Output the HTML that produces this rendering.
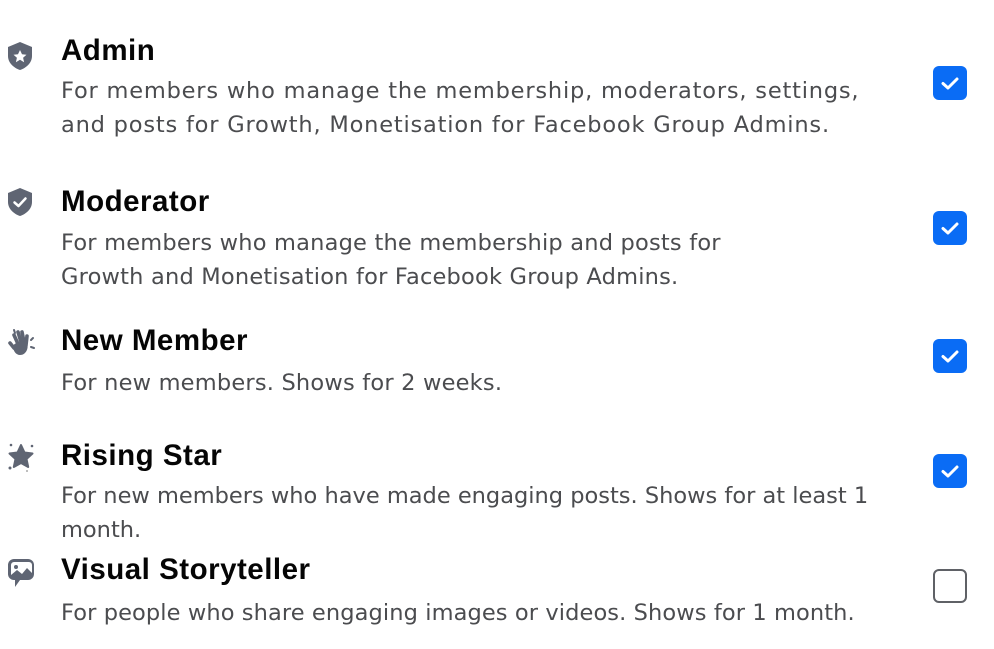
<!DOCTYPE html>
<html><head><meta charset="utf-8"><style>
body{margin:0;width:994px;height:649px;background:#fff;position:relative;overflow:hidden;font-family:"Liberation Sans",sans-serif}
.t{position:absolute;left:61px;font-weight:bold;font-size:29.5px;color:#050505;line-height:34px;letter-spacing:0.5px}
.d{position:absolute;left:61px;font-family:"DejaVu Sans",sans-serif;font-size:22.5px;color:#4b4c4f;line-height:34px;letter-spacing:0.2px;white-space:nowrap}
.cb{position:absolute;left:933px;width:34px;height:34px;border-radius:6px;background:#0a6cf5}
.cb svg{position:absolute;left:0;top:0}
.un{background:#fff;border:2.5px solid #5f6166;box-sizing:border-box}
.ic{position:absolute;left:5px}
</style></head><body>
<svg class="ic" style="top:40px" width="30" height="32" viewBox="0 0 30 32"><path d="M15 2 L27 7 V16 C27 23 21 28 15 30 C9 28 3 23 3 16 V7 Z" fill="#5f6573"/><path d="M15 10 l2 4.2 4.5 .5 -3.4 3 1 4.5 -4.1 -2.4 -4.1 2.4 1 -4.5 -3.4 -3 4.5 -.5z" fill="#fff"/></svg>
<svg class="ic" style="top:186px" width="30" height="32" viewBox="0 0 30 32"><path d="M15 2 L27 7 V16 C27 23 21 28 15 30 C9 28 3 23 3 16 V7 Z" fill="#5f6573"/><path d="M9.5 16.5 l4 3.5 7 -7.5" stroke="#fff" stroke-width="2.5" fill="none" stroke-linecap="round" stroke-linejoin="round"/></svg>
<svg class="ic" style="top:326px" width="34" height="34" viewBox="0 0 34 34">
<g stroke="#5f6573" stroke-width="3.6" stroke-linecap="round" fill="none">
<path d="M5 17 L9 22"/><path d="M9 9 L13 18"/><path d="M13 6 L16 16"/><path d="M17 6 L19 16"/><path d="M22 10 L21 19"/></g>
<path d="M8 20 C10 16 20 14 22 17 C24 22 21 29 15 29 C11 29 8 25 8 20Z" fill="#5f6573"/>
<path d="M9 4 L10 7 M26 14 L28 12 M26 21 L29 22" stroke="#5f6573" stroke-width="2" stroke-linecap="round"/></svg>
<svg class="ic" style="top:440px" width="32" height="34" viewBox="0 0 32 34"><path d="M16 5 l3.5 7.5 8 1 -6 5.5 1.7 8 -7.2 -4 -7.2 4 1.7 -8 -6 -5.5 8 -1z" fill="#5f6573" stroke="#5f6573" stroke-width="2" stroke-linejoin="round"/><circle cx="6" cy="5" r="1.3" fill="#5f6573"/><circle cx="27" cy="6" r="1.3" fill="#5f6573"/><circle cx="5" cy="28" r="1.5" fill="#5f6573"/><circle cx="22" cy="31" r="1" fill="#aaa"/></svg>
<svg class="ic" style="top:556px" width="32" height="34" viewBox="0 0 32 34"><rect x="3" y="3" width="26" height="21" rx="6" fill="#5f6573"/><path d="M10 24 v7 l5 -7z" fill="#5f6573"/><path d="M6 19 l6 -5 5 4 5 -6 5 5 V9 a3 3 0 0 0 -3 -3 H9 a3 3 0 0 0 -3 3z" fill="#fff"/><circle cx="11" cy="11" r="2" fill="#5f6573"/></svg>

<div class="t" style="top:34px">Admin</div>
<div class="d" style="top:74px;letter-spacing:0.8px">For members who manage the membership, moderators, settings,<br>and posts for Growth, Monetisation for Facebook Group Admins.</div>
<div class="t" style="top:185px">Moderator</div>
<div class="d" style="top:226px">For members who manage the membership and posts for<br>Growth and Monetisation for Facebook Group Admins.</div>
<div class="t" style="top:324px">New Member</div>
<div class="d" style="top:366px">For new members. Shows for 2 weeks.</div>
<div class="t" style="top:439px">Rising Star</div>
<div class="d" style="top:479px;letter-spacing:0px">For new members who have made engaging posts. Shows for at least 1<br>month.</div>
<div class="t" style="top:553px">Visual Storyteller</div>
<div class="d" style="top:596px;letter-spacing:0.1px">For people who share engaging images or videos. Shows for 1 month.</div>

<div class="cb" style="top:66px"><svg width="34" height="34"><path d="M10 17.5 l5 4.5 9 -9" stroke="#fff" stroke-width="3" fill="none" stroke-linecap="round" stroke-linejoin="round"/></svg></div>
<div class="cb" style="top:211px"><svg width="34" height="34"><path d="M10 17.5 l5 4.5 9 -9" stroke="#fff" stroke-width="3" fill="none" stroke-linecap="round" stroke-linejoin="round"/></svg></div>
<div class="cb" style="top:339px"><svg width="34" height="34"><path d="M10 17.5 l5 4.5 9 -9" stroke="#fff" stroke-width="3" fill="none" stroke-linecap="round" stroke-linejoin="round"/></svg></div>
<div class="cb" style="top:454px"><svg width="34" height="34"><path d="M10 17.5 l5 4.5 9 -9" stroke="#fff" stroke-width="3" fill="none" stroke-linecap="round" stroke-linejoin="round"/></svg></div>
<div class="cb un" style="top:569px"></div>
</body></html>
